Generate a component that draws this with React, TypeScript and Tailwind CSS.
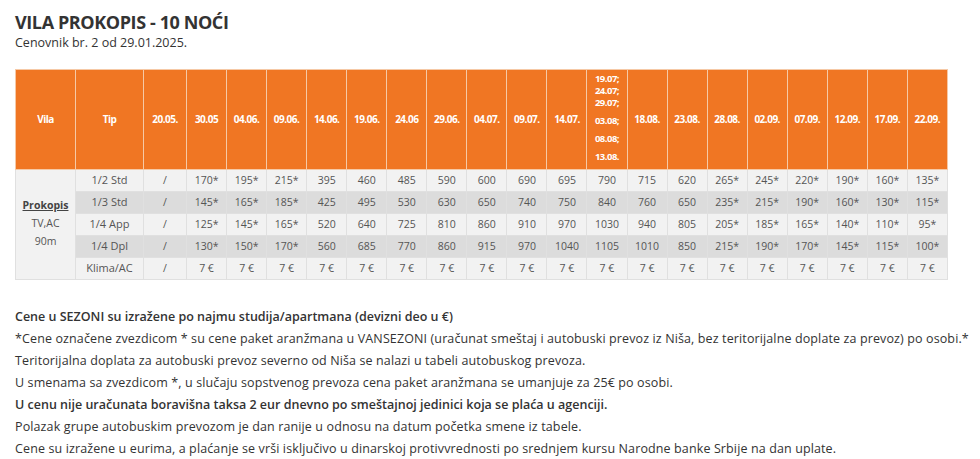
import React from "react";

const dates = [
  "20.05.", "30.05", "04.06.", "09.06.", "14.06.", "19.06.", "24.06", "29.06.", "04.07.", "09.07.", "14.07.",
  "MULTI", "18.08.", "23.08.", "28.08.", "02.09.", "07.09.", "12.09.", "17.09.", "22.09.",
];

const rows: { tip: string; prices: string[] }[] = [
  { tip: "1/2 Std", prices: ["/", "170*", "195*", "215*", "395", "460", "485", "590", "600", "690", "695", "790", "715", "620", "265*", "245*", "220*", "190*", "160*", "135*"] },
  { tip: "1/3 Std", prices: ["/", "145*", "165*", "185*", "425", "495", "530", "630", "650", "740", "750", "840", "760", "650", "235*", "215*", "190*", "160*", "130*", "115*"] },
  { tip: "1/4 App", prices: ["/", "125*", "145*", "165*", "520", "640", "725", "810", "860", "910", "970", "1030", "940", "805", "205*", "185*", "165*", "140*", "110*", "95*"] },
  { tip: "1/4 Dpl", prices: ["/", "130*", "150*", "170*", "560", "685", "770", "860", "915", "970", "1040", "1105", "1010", "850", "215*", "190*", "170*", "145*", "115*", "100*"] },
  { tip: "Klima/AC", prices: ["/", "7 €", "7 €", "7 €", "7 €", "7 €", "7 €", "7 €", "7 €", "7 €", "7 €", "7 €", "7 €", "7 €", "7 €", "7 €", "7 €", "7 €", "7 €", "7 €"] },
];

const notes: { text: string; bold?: boolean }[] = [
  { text: "Cene u SEZONI su izražene po najmu studija/apartmana (devizni deo u €)", bold: true },
  { text: "*Cene označene zvezdicom * su cene paket aranžmana u VANSEZONI (uračunat smeštaj i autobuski prevoz iz Niša, bez teritorijalne doplate za prevoz) po osobi.*" },
  { text: "Teritorijalna doplata za autobuski prevoz severno od Niša se nalazi u tabeli autobuskog prevoza." },
  { text: "U smenama sa zvezdicom *, u slučaju sopstvenog prevoza cena paket aranžmana se umanjuje za 25€ po osobi." },
  { text: "U cenu nije uračunata boravišna taksa 2 eur dnevno po smeštajnoj jedinici koja se plaća u agenciji.", bold: true },
  { text: "Polazak grupe autobuskim prevozom je dan ranije u odnosu na datum početka smene iz tabele." },
  { text: "Cene su izražene u eurima, a plaćanje se vrši isključivo u dinarskoj protivvrednosti po srednjem kursu Narodne banke Srbije na dan uplate." },
];

export default function App() {
  return (
    <div className="w-[980px] h-[459px] overflow-hidden bg-white px-[15px] pt-[11px] text-[#333] font-['Open_Sans',sans-serif]">
      {/* Header */}
      <h1 className="text-[18px] leading-[22px] font-bold tracking-[-0.4px] text-[#333]">VILA PROKOPIS - 10 NOĆI</h1>
      <p className="text-[12.5px] leading-[18px] mt-[1px] text-[#333]">Cenovnik br. 2 od 29.01.2025.</p>

      {/* Price table */}
      <table className="mt-[17px] w-[932px] table-fixed border-collapse text-center">
        <colgroup>
          <col className="w-[60px]" />
          <col className="w-[68px]" />
          <col className="w-[43px]" />
          {dates.slice(1).map((d) => (
            <col key={d} className="w-[40.05px]" />
          ))}
        </colgroup>
        <thead>
          <tr className="h-[100px] bg-[#f07623] text-white text-[10px] font-bold tracking-[-0.5px]">
            <th className="border border-[#f6c9a6]">Vila</th>
            <th className="border border-[#f6c9a6]">Tip</th>
            {dates.map((d) =>
              d === "MULTI" ? (
                <th key={d} className="border border-[#f6c9a6] px-0 text-[9.5px] leading-[12px]">
                  <div>19.07;</div>
                  <div>24.07;</div>
                  <div>29.07;</div>
                  <div className="leading-[18px] mt-[3px]">03.08;</div>
                  <div className="leading-[18px]">08.08;</div>
                  <div className="leading-[18px]">13.08.</div>
                </th>
              ) : (
                <th key={d} className="border border-[#f6c9a6] px-0">
                  {d}
                </th>
              )
            )}
          </tr>
        </thead>
        <tbody className="text-[10.5px] text-[#555]">
          {rows.map((r, i) => (
            <tr key={r.tip} className={`h-[22px] ${i % 2 === 1 ? "bg-[#dcdcdc]" : "bg-[#f2f2f2]"}`}>
              {i === 0 && (
                <td rowSpan={5} className="border border-[#e0e0e0] bg-[#f2f2f2] align-middle leading-[18px] pb-[4px]">
                  <div className="font-bold underline text-[#444]">Prokopis</div>
                  <div>TV,AC</div>
                  <div>90m</div>
                </td>
              )}
              <td className="border border-[#e0e0e0] text-[11px]">{r.tip}</td>
              {r.prices.map((p, j) => (
                <td key={j} className="border border-[#e0e0e0] px-0">
                  {p}
                </td>
              ))}
            </tr>
          ))}
        </tbody>
      </table>

      {/* Notes */}
      <div className="mt-[26px] text-[12.5px] leading-[22px] text-[#333]">
        {notes.map((n) => (
          <p key={n.text} className={`whitespace-nowrap ${n.bold ? "font-semibold" : "tracking-[0.12px]"}`}>
            {n.text}
          </p>
        ))}
      </div>
    </div>
  );
}
